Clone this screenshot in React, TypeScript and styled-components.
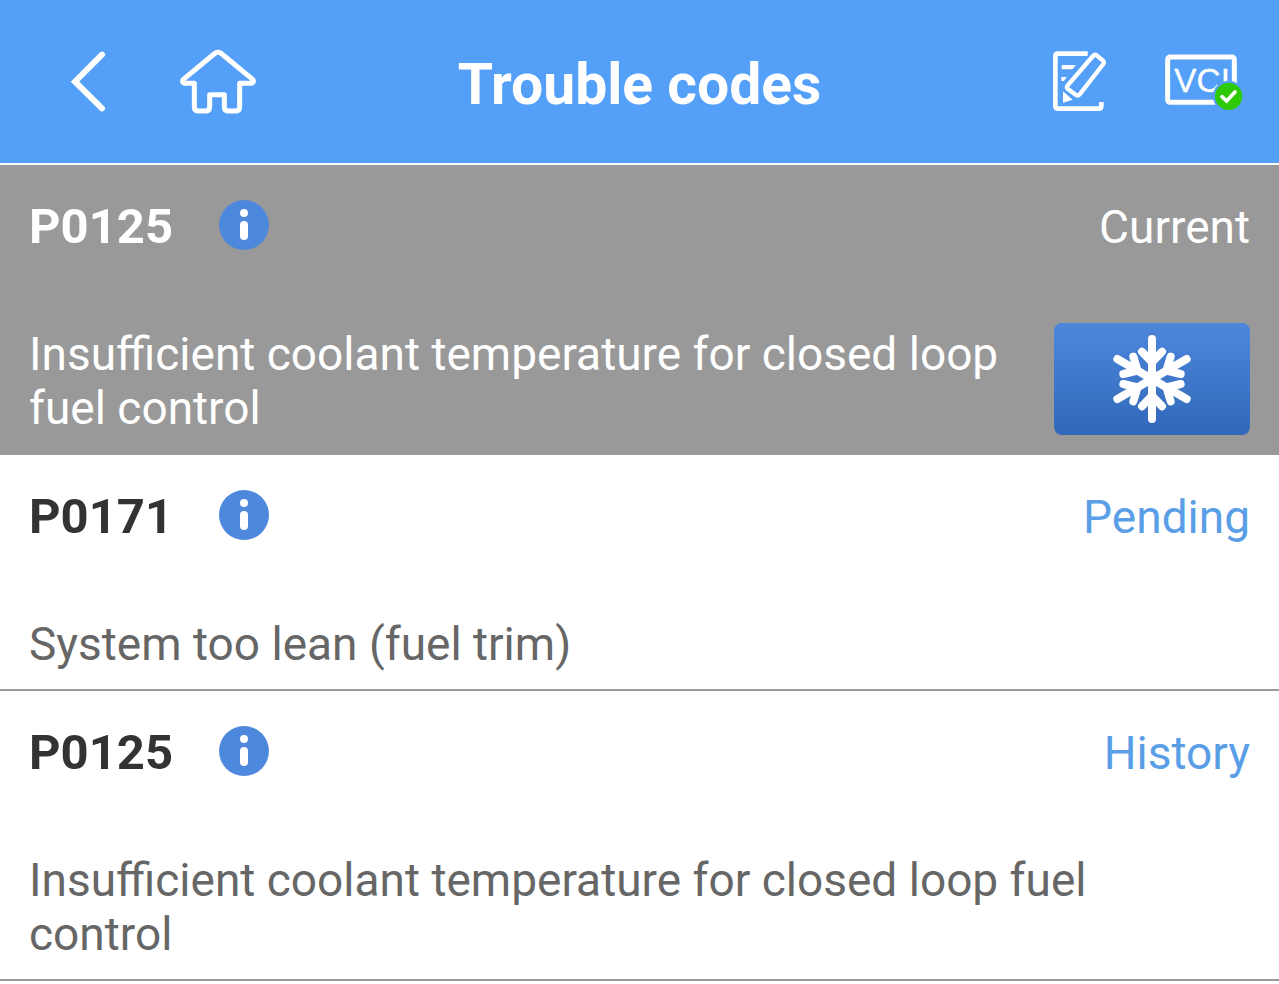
import React, { useState } from "react";
import styled, { createGlobalStyle } from "styled-components";

const GlobalStyle = createGlobalStyle`
  * { box-sizing: border-box; }
  body {
    margin: 0;
    background: #ffffff;
    font-family: Roboto, "Noto Sans", sans-serif;
  }
  button {
    margin: 0;
    padding: 0;
    border: 0;
    background: none;
    font: inherit;
    color: inherit;
    cursor: pointer;
  }
  svg { display: block; }
`;

const Header = styled.header`
  display: grid;
  grid-template-columns: 1fr auto 1fr;
  align-items: center;
  height: 165px;
  padding: 0 34px;
  background: #549ff8;
  border-bottom: 2px solid #ffffff;
`;

const Title = styled.h1`
  margin: 0;
  padding-top: 6px;
  font-size: 57px;
  line-height: 66px;
  font-weight: 700;
  color: #ffffff;
  white-space: nowrap;
`;

const StartTools = styled.div`
  display: flex;
  align-items: center;
  gap: 70px;
  padding-left: 35px;
`;

const EndTools = styled.div`
  display: flex;
  align-items: center;
  justify-content: flex-end;
  gap: 55px;
`;

const List = styled.ul`
  margin: 0;
  padding: 0;
  list-style: none;
`;

const Row = styled.li<{ $selected: boolean }>`
  padding: 34px 29px 18px;
  background: ${(p) => (p.$selected ? "#999999" : "#ffffff")};
  border-bottom: 2px solid #999999;
  color: ${(p) => (p.$selected ? "#ffffff" : "#666666")};
`;

const RowHead = styled.div`
  display: flex;
  align-items: center;
  height: 56px;
`;

const Code = styled.h2<{ $selected: boolean }>`
  margin: 0;
  width: 190px;
  font-size: 49px;
  line-height: 56px;
  font-weight: 700;
  color: ${(p) => (p.$selected ? "#ffffff" : "#333333")};
`;

const InfoButton = styled.button`
  align-self: flex-start;
`;

const Status = styled.span<{ $selected: boolean }>`
  margin-left: auto;
  font-size: 46px;
  line-height: 54px;
  color: ${(p) => (p.$selected ? "#ffffff" : "#599ee6")};
`;

const RowBody = styled.div<{ $action: boolean }>`
  display: flex;
  align-items: flex-end;
  margin-top: ${(p) => (p.$action ? 68 : 72)}px;
`;

const Description = styled.p`
  flex: 1;
  margin: 0;
  padding-right: 30px;
  font-size: 46px;
  line-height: 54px;
`;

const FreezeButton = styled.button`
  display: flex;
  align-items: center;
  justify-content: center;
  width: 196px;
  height: 112px;
  border-radius: 8px;
  background: linear-gradient(#4d87dc, #3168b9);
`;

const BackIcon = () => (
  <svg width="39" height="65" viewBox="57 57 117 195" fill="none" stroke="#fff" strokeWidth="18" strokeLinecap="round" strokeLinejoin="miter">
    <path d="M156 74 75 155l81 80" />
  </svg>
);

const HomeIcon = () => (
  <svg width="80" height="71" viewBox="384 48 240 213" fill="none" stroke="#fff" strokeWidth="15" strokeLinecap="round" strokeLinejoin="round">
    <path d="M496 69q8-5 16 0l96 79q6 8-3 12h-36v70q0 13-13 13h-20q-13 0-13-13v-36h-44v36q0 13-13 13h-20q-13 0-13-13v-70h-30q-9-4-3-12z" />
  </svg>
);

const EditIcon = () => (
  <svg width="57" height="65" viewBox="33 57 171 195" fill="none" stroke="#fff" strokeWidth="14" strokeLinejoin="round">
    <path d="M143 71H54q-8 0-8 8v148q0 9 9 9h121q8 0 8-8v-12" />
    <path d="M65 105h43l-11 13H65z" fill="#fff" stroke="none" />
    <path d="M64 141h16l-8 12h-8z" fill="#fff" stroke="none" />
    <path d="M159 78q5-6 11-2l18 15q6 5 2 11l-71 91q-5 6-11 2l-24-18q-6-5-1-11z" strokeWidth="13" />
    <path d="M69 184l29 25-29 9z" fill="#fff" stroke="none" />
  </svg>
);

const VciIcon = () => (
  <svg width="82" height="63" viewBox="369 60 246 189">
    <rect x="383" y="81" width="200" height="136" rx="7" fill="none" stroke="#fff" strokeWidth="15" />
    <text x="403" y="187" fontFamily="Liberation Sans, sans-serif" fontSize="100" fill="#fff" stroke="#fff" strokeWidth="1">
      VCI
    </text>
    <circle cx="566" cy="199" r="47" fill="#549ff8" />
    <circle cx="566" cy="199" r="41" fill="#2fca07" />
    <path d="M546 200l14 13 25-27" fill="none" stroke="#fff" strokeWidth="11" strokeLinecap="round" />
  </svg>
);

const InfoIcon = () => (
  <svg width="50" height="52" viewBox="0 0 50 52">
    <circle cx="25" cy="26" r="25" fill="#4e88dd" />
    <circle cx="25" cy="14" r="4" fill="#fff" />
    <rect x="21" y="22" width="8" height="19" rx="4" fill="#fff" />
  </svg>
);

const SnowflakeIcon = () => (
  <svg width="88" height="94" viewBox="-132 -141 264 282" fill="none" stroke="#fff" strokeWidth="24" strokeLinecap="round" strokeLinejoin="round">
    {[0, 60, 120, 180, 240, 300].map((angle) => (
      <path key={angle} transform={`rotate(${angle})`} d="M0 0V-120M-30-82 0-50 30-82" />
    ))}
  </svg>
);

interface TroubleCode {
  code: string;
  status: string;
  description: string;
  freezeFrame: boolean;
}

const troubleCodes: TroubleCode[] = [
  {
    code: "P0125",
    status: "Current",
    description: "Insufficient coolant temperature for closed loop fuel control",
    freezeFrame: true,
  },
  { code: "P0171", status: "Pending", description: "System too lean (fuel trim)", freezeFrame: false },
  {
    code: "P0125",
    status: "History",
    description: "Insufficient coolant temperature for closed loop fuel control",
    freezeFrame: false,
  },
];

export default function App() {
  const [selected, setSelected] = useState(0);
  return (
    <>
      <GlobalStyle />
      <Header>
        <StartTools>
          <button aria-label="Back"><BackIcon /></button>
          <button aria-label="Home"><HomeIcon /></button>
        </StartTools>
        <Title>Trouble codes</Title>
        <EndTools>
          <button aria-label="Edit"><EditIcon /></button>
          <button aria-label="VCI connected"><VciIcon /></button>
        </EndTools>
      </Header>
      <main>
        <List>
          {troubleCodes.map((item, index) => {
            const active = index === selected;
            return (
              <Row key={index} $selected={active} onClick={() => setSelected(index)}>
                <RowHead>
                  <Code $selected={active}>{item.code}</Code>
                  <InfoButton aria-label={`About ${item.code}`}><InfoIcon /></InfoButton>
                  <Status $selected={active}>{item.status}</Status>
                </RowHead>
                <RowBody $action={item.freezeFrame}>
                  <Description>{item.description}</Description>
                  {item.freezeFrame && (
                    <FreezeButton aria-label="Freeze frame"><SnowflakeIcon /></FreezeButton>
                  )}
                </RowBody>
              </Row>
            );
          })}
        </List>
      </main>
    </>
  );
}
